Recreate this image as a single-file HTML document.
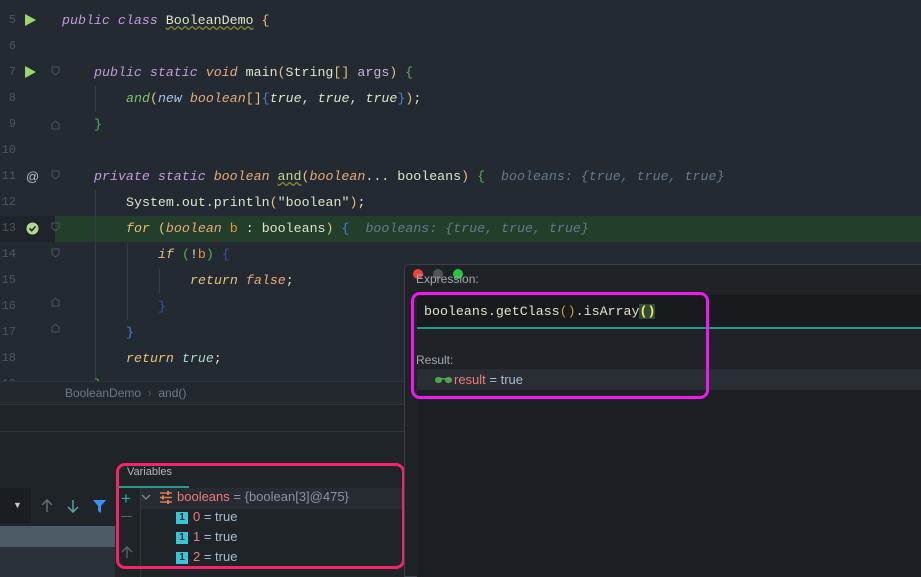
<!DOCTYPE html>
<html><head><meta charset="utf-8"><style>
*{margin:0;padding:0;box-sizing:border-box}
body{width:921px;height:577px;overflow:hidden;background:#232a31;position:relative;font-family:"Liberation Sans",sans-serif}
.a{position:absolute}
.code{font-family:"Liberation Mono",monospace;font-size:13.3px;white-space:pre;line-height:26px}
.ln{position:absolute;left:0;width:16px;text-align:right;color:#4b5660;font-family:"Liberation Mono",monospace;font-size:12px;line-height:26px}
.kw{color:#c39ade;font-style:italic}
.ty{color:#e9a97a;font-style:italic}
.it{font-style:italic}
.pl{color:#dfe4c9}
.y{color:#e5c07b}
.g{color:#5bb04f}
.b{color:#3d82d8}
.hint{color:#66788a;font-style:italic}
</style></head><body>
<div class="a" style="left:55px;top:216px;width:866px;height:26px;background:#233f2b"></div>
<div class="a" style="left:0;top:216px;width:55px;height:26px;background:#1e242a"></div>
<div class="a" style="left:95px;top:86px;width:1px;height:26px;background:#333c44"></div>
<div class="a" style="left:95px;top:190px;width:1px;height:190px;background:#333c44"></div>
<div class="a" style="left:127px;top:242px;width:1px;height:78px;background:#333c44"></div>
<div class="a" style="left:159px;top:268px;width:1px;height:26px;background:#333c44"></div>

<div class="ln" style="top:7px">5</div><div class="ln" style="top:33px">6</div><div class="ln" style="top:59px">7</div><div class="ln" style="top:85px">8</div><div class="ln" style="top:111px">9</div><div class="ln" style="top:137px">10</div><div class="ln" style="top:163px">11</div><div class="ln" style="top:189px">12</div><div class="ln" style="top:215px">13</div><div class="ln" style="top:241px">14</div><div class="ln" style="top:267px">15</div><div class="ln" style="top:293px">16</div><div class="ln" style="top:319px">17</div><div class="ln" style="top:345px">18</div><div class="ln" style="top:371px">19</div>
<svg class="a" style="left:24px;top:13px" width="14" height="14"><path d="M1 1L12 7L1 13Z" fill="#9bd86a"/></svg>
<svg class="a" style="left:24px;top:65px" width="14" height="14"><path d="M1 1L12 7L1 13Z" fill="#9bd86a"/></svg>
<div class="a" style="left:26px;top:169px;color:#b8c0c8;font-size:13px">@</div>
<svg class="a" style="left:26px;top:222px" width="13" height="13"><circle cx="6.5" cy="6.5" r="6" fill="#b5d98a"/><path d="M3.5 6.5L5.7 8.7L9.5 4.5" stroke="#1e2a20" stroke-width="1.6" fill="none"/></svg>
<svg class="a" style="left:51px;top:66px" width="10" height="330"><g stroke="#4a545e" fill="none"><path d="M1 1H8V6L4.5 9L1 6Z"/><path d="M1 58L4.5 55L8 58V63H1Z"/><path d="M1 105H8V110L4.5 113L1 110Z"/><path d="M1 157H8V162L4.5 165L1 162Z"/><path d="M1 183H8V188L4.5 191L1 188Z"/><path d="M1 235L4.5 232L8 235V240H1Z"/><path d="M1 261L4.5 258L8 261V266H1Z"/></g></svg>

<div class="a code" style="left:62px;top:8px"><span class="kw">public class</span> <span class="pl" style="text-decoration:underline wavy #8a8a3a">BooleanDemo</span> <span class="y">{</span></div>
<div class="a code" style="left:94px;top:60px"><span class="kw">public static</span> <span class="ty">void</span> <span class="pl">main</span><span class="y">(</span><span class="pl">String</span><span class="y">[]</span> <span class="pl" style="color:#c7b3e0">args</span><span class="y">)</span> <span class="g">{</span></div>
<div class="a code" style="left:126px;top:86px"><span class="it" style="color:#7fc36a">and</span><span class="y">(</span><span class="kw" style="color:#a6c6e8">new</span> <span class="ty">boolean</span><span class="y">[]</span><span class="b">{</span><span class="it pl">true</span><span class="pl">, </span><span class="it pl">true</span><span class="pl">, </span><span class="it pl">true</span><span class="b">}</span><span class="y">)</span><span class="pl">;</span></div>
<div class="a code" style="left:94px;top:112px"><span class="g">}</span></div>
<div class="a code" style="left:94px;top:164px"><span class="kw">private static</span> <span class="ty">boolean</span> <span class="pl" style="color:#c6d88a;text-decoration:underline wavy #8a8a3a">and</span><span class="y">(</span><span class="ty">boolean</span><span class="pl">...</span> <span class="pl">booleans</span><span class="y">)</span> <span class="g">{</span>  <span class="hint">booleans: {true, true, true}</span></div>
<div class="a code" style="left:126px;top:190px"><span class="pl">System.out.println</span><span class="y">(</span><span class="pl">"boolean"</span><span class="y">)</span><span class="pl">;</span></div>
<div class="a code" style="left:126px;top:216px"><span class="it y">for</span> <span class="y">(</span><span class="ty">boolean</span> <span class="y" style="color:#e39a3a">b</span> <span class="pl">: booleans</span><span class="y">)</span> <span class="b">{</span>  <span class="hint">booleans: {true, true, true}</span></div>
<div class="a code" style="left:158px;top:242px"><span class="it y">if</span> <span class="g">(</span><span class="pl">!</span><span class="y" style="color:#e39a3a">b</span><span class="g">)</span> <span class="b" style="color:#3a4fb0">{</span></div>
<div class="a code" style="left:190px;top:268px"><span class="it y">return</span> <span class="ty">false</span><span class="pl">;</span></div>
<div class="a code" style="left:158px;top:294px"><span class="b" style="color:#3a4fb0">}</span></div>
<div class="a code" style="left:126px;top:320px"><span class="b">}</span></div>
<div class="a code" style="left:126px;top:346px"><span class="it y">return</span> <span class="it pl" style="color:#a8d8c8">true</span><span class="pl">;</span></div>
<div class="a code" style="left:94px;top:372px"><span class="g">}</span></div>

<div class="a" style="left:0;top:381px;width:405px;height:24px;background:#22282e;border-top:1px solid #2d353c;border-bottom:1px solid #2d353c"></div>
<div class="a" style="left:65px;top:386px;font-size:12px;color:#6c7a86">BooleanDemo &nbsp;<span style="color:#4f5b65">›</span>&nbsp; and()</div>
<div class="a" style="left:0;top:405px;width:405px;height:172px;background:#1f2429"></div>
<div class="a" style="left:0;top:431px;width:405px;height:1px;background:#2d353c"></div>
<div class="a" style="left:0;top:488px;width:31px;height:35px;background:#1a1e22"></div>
<div class="a" style="left:13px;top:500px;font-size:9px;color:#c8ccd0">▼</div>
<svg class="a" style="left:40px;top:498px" width="70" height="16"><g fill="none" stroke-width="1.4"><path d="M7 14V2M2 7L7 2L12 7" stroke="#6a737c"/><path d="M33 2V14M28 9L33 14L38 9" stroke="#5fa8a0"/></g><path d="M53 2H66L61 8V15L58 13V8Z" fill="#3e8ef0"/></svg>
<div class="a" style="left:0;top:526px;width:115px;height:21px;background:#4d5b66"></div>
<div class="a" style="left:0;top:547px;width:115px;height:30px;background:#2a3138"></div>

<div class="a" style="left:115px;top:463px;width:290px;height:114px;background:#1f2428"></div>
<div class="a" style="left:127px;top:466px;font-size:11px;color:#b0b8c0">Variables</div>
<div class="a" style="left:118px;top:486px;width:71px;height:2px;background:#2c9a8a"></div>
<div class="a" style="left:140px;top:488px;width:263px;height:21px;background:#262c31"></div>
<div class="a" style="left:140px;top:488px;width:1px;height:89px;background:#2f363c"></div>
<div class="a" style="left:121px;top:489px;font-size:17px;color:#3aa8a0">+</div>
<div class="a" style="left:121px;top:516px;width:11px;height:1px;background:#5a636b"></div>
<svg class="a" style="left:120px;top:544px" width="14" height="16"><path d="M7 14V3M2 8L7 3L12 8" stroke="#5a636b" stroke-width="1.4" fill="none"/></svg>
<svg class="a" style="left:141px;top:493px" width="10" height="8"><path d="M1 2L5 6L9 2" stroke="#7a8a96" stroke-width="1.3" fill="none"/></svg>
<svg class="a" style="left:159px;top:491px" width="14" height="13"><g stroke="#e07a50" stroke-width="1.5"><path d="M1 2H13M1 6.5H13M1 11H13"/></g><g fill="#e07a50"><rect x="8" y="0" width="2" height="4"/><rect x="3" y="4.5" width="2" height="4"/><rect x="8" y="9" width="2" height="4"/></g></svg>
<div class="a" style="left:177px;top:489px;font-size:13px;color:#8a949c;white-space:nowrap"><span style="color:#f07a78">booleans</span> = {boolean[3]@475}</div>
<div class="a" style="left:176px;top:512px;width:12px;height:12px;background:#3bc4d8;color:#173038;font-size:10px;text-align:center;line-height:12px;font-weight:bold">1</div>
<div class="a" style="left:176px;top:532px;width:12px;height:12px;background:#3bc4d8;color:#173038;font-size:10px;text-align:center;line-height:12px;font-weight:bold">1</div>
<div class="a" style="left:176px;top:552px;width:12px;height:12px;background:#3bc4d8;color:#173038;font-size:10px;text-align:center;line-height:12px;font-weight:bold">1</div>
<div class="a" style="left:193px;top:509px;font-size:13px;color:#a8bcd0"><span style="color:#f07a78">0</span> = true</div>
<div class="a" style="left:193px;top:529px;font-size:13px;color:#a8bcd0"><span style="color:#f07a78">1</span> = true</div>
<div class="a" style="left:193px;top:549px;font-size:13px;color:#a8bcd0"><span style="color:#f07a78">2</span> = true</div>
<div class="a" style="left:116px;top:463px;width:289px;height:106px;border:3px solid #f5246a;border-radius:9px"></div>

<div class="a" style="left:404px;top:264px;width:517px;height:313px;background:#1f2328;border:1px solid #3a4148;border-right:none;border-radius:5px 0 0 0"></div>
<div class="a" style="left:413px;top:269px;width:10px;height:10px;border-radius:50%;background:#f0403a"></div>
<div class="a" style="left:433px;top:269px;width:10px;height:10px;border-radius:50%;background:#505458"></div>
<div class="a" style="left:453px;top:269px;width:10px;height:10px;border-radius:50%;background:#2cc43c"></div>
<div class="a" style="left:416px;top:272px;font-size:12px;color:#a0a8b0">Expression:</div>
<div class="a" style="left:417px;top:295px;width:504px;height:32px;background:#181b1e"></div>
<div class="a" style="left:417px;top:327px;width:504px;height:2px;background:#22998a"></div>
<div class="a code" style="left:424px;top:299px;line-height:26px"><span class="pl">booleans.getClass</span><span class="y" style="color:#c79a3a">()</span><span class="pl">.isArray</span><span style="background:#2d4a3e;color:#ffe94a;font-weight:bold">()</span></div>
<div class="a" style="left:416px;top:353px;font-size:12px;color:#a0a8b0">Result:</div>
<div class="a" style="left:417px;top:369px;width:504px;height:21px;background:#282e34"></div>
<div class="a" style="left:417px;top:390px;width:504px;height:187px;background:#1c2024"></div>
<svg class="a" style="left:435px;top:376px" width="17" height="8"><rect x="0" y="1" width="7" height="6" rx="3" fill="#4aa84a"/><rect x="10" y="1" width="7" height="6" rx="3" fill="#4aa84a"/><rect x="6" y="2" width="5" height="1.5" fill="#4aa84a"/></svg>
<div class="a" style="left:454px;top:372px;font-size:13px;color:#a8bcd0"><span style="color:#f07a78">result</span> = true</div>
<div class="a" style="left:411px;top:292px;width:298px;height:107px;border:3px solid #f01af0;border-radius:9px"></div>
</body></html>
